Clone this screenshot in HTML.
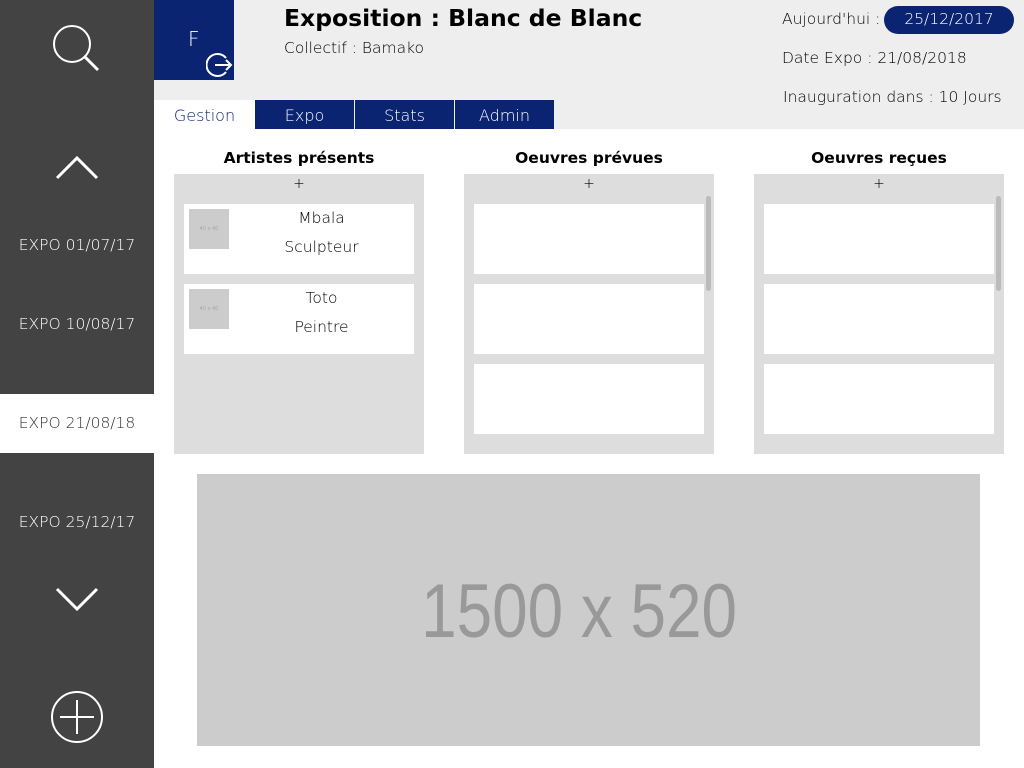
<!DOCTYPE html>
<html><head><meta charset="utf-8"><style>
*{margin:0;padding:0;box-sizing:border-box}
body{width:1024px;height:768px;position:relative;overflow:hidden;background:#fff;font-family:"DejaVu Sans","Liberation Sans",sans-serif;font-weight:200;color:#000}
.a{position:absolute}
#side{left:0;top:0;width:154px;height:768px;background:#434343}
.exp{left:0;width:154px;text-align:center;color:#fff;font-size:15.5px}
#top{left:154px;top:0;width:870px;height:129px;background:#eeeeee}
.tab{top:100px;height:29px;width:99px;background:#0b2472;color:#fff;font-size:16px;text-align:center;line-height:31px}
.col{width:250px;height:280px;top:174px;background:#dddddd}
.ttl{width:250px;text-align:center;font-weight:bold;font-size:15.5px;top:149px}
.card{left:10px;width:230px;height:70px;background:#fff}
.plus{width:250px;text-align:center;top:2px;font-size:14px}
.th{left:5px;top:5px;width:40px;height:40px;background:#ccc;font-size:5px;color:#888;text-align:center;line-height:40px}
.nm{left:50px;width:175px;text-align:center;font-size:15.5px}
.sb{left:242px;top:22px;width:5px;height:95px;background:#bbb;border-radius:3px}
</style></head><body>
<div id="side" class="a">
<svg class="a" style="left:50px;top:22px" width="54" height="54" viewBox="0 0 54 54"><circle cx="22" cy="22" r="18" fill="none" stroke="#fff" stroke-width="2"/><line x1="34" y1="34" x2="48" y2="48" stroke="#fff" stroke-width="3"/></svg>
<svg class="a" style="left:55px;top:152px" width="44" height="28"><polyline points="2,26 22,6 42,26" fill="none" stroke="#fff" stroke-width="3"/></svg>
<div class="a exp" style="top:236px">EXPO 01/07/17</div>
<div class="a exp" style="top:315px">EXPO 10/08/17</div>
<div class="a" style="left:0;top:394px;width:154px;height:59px;background:#fff"></div>
<div class="a exp" style="top:414px;color:#333">EXPO 21/08/18</div>
<div class="a exp" style="top:513px">EXPO 25/12/17</div>
<svg class="a" style="left:55px;top:586px" width="44" height="28"><polyline points="2,3 22,23 42,3" fill="none" stroke="#fff" stroke-width="3"/></svg>
<svg class="a" style="left:50px;top:690px" width="54" height="54"><circle cx="27" cy="27" r="25" fill="none" stroke="#fff" stroke-width="2"/><line x1="27" y1="10" x2="27" y2="44" stroke="#fff" stroke-width="2"/><line x1="10" y1="27" x2="44" y2="27" stroke="#fff" stroke-width="2"/></svg>
</div>
<div id="top" class="a">
<div class="a" style="left:0;top:0;width:80px;height:80px;background:#0b2472"></div>
<div class="a" style="left:34px;top:27px;color:#fff;font-size:20px">F</div>
<svg class="a" style="left:52px;top:52px" width="28" height="26"><path d="M20 6 A11 11 0 1 0 20 20" fill="none" stroke="#fff" stroke-width="2"/><line x1="9" y1="13" x2="25" y2="13" stroke="#fff" stroke-width="2"/><polyline points="20,8 25,13 20,18" fill="none" stroke="#fff" stroke-width="2"/></svg>
<div class="a" style="left:130px;top:4px;font-size:23.5px;font-weight:bold">Exposition : Blanc de Blanc</div>
<div class="a" style="left:130px;top:39px;font-size:15.5px">Collectif : Bamako</div>
<div class="a" style="left:628px;top:10px;font-size:15.5px">Aujourd'hui :</div>
<div class="a" style="left:730px;top:6px;width:130px;height:28px;border-radius:14px;background:#0b2472;color:#fff;font-size:15.5px;text-align:center;line-height:27px">25/12/2017</div>
<div class="a" style="left:628px;top:49px;font-size:15.5px">Date Expo : 21/08/2018</div>
<div class="a" style="left:629px;top:88px;font-size:15.5px">Inauguration dans : 10 Jours</div>
<div class="a" style="left:0;top:100px;width:101px;height:29px;background:#fff;color:#0b2472;font-size:16px;text-align:center;line-height:31px">Gestion</div>
<div class="a tab" style="left:101px">Expo</div>
<div class="a tab" style="left:201px">Stats</div>
<div class="a tab" style="left:301px">Admin</div>
</div>
<div class="a ttl" style="left:174px">Artistes présents</div>
<div class="a ttl" style="left:464px">Oeuvres prévues</div>
<div class="a ttl" style="left:754px">Oeuvres reçues</div>
<div class="a col" style="left:174px"><div class="a plus">+</div>
<div class="a card" style="top:30px"><div class="a th">40 x 40</div><div class="a nm" style="top:5px">Mbala</div><div class="a nm" style="top:34px">Sculpteur</div></div>
<div class="a card" style="top:110px"><div class="a th">40 x 40</div><div class="a nm" style="top:5px">Toto</div><div class="a nm" style="top:34px">Peintre</div></div>
</div>
<div class="a col" style="left:464px"><div class="a plus">+</div><div class="a sb"></div>
<div class="a card" style="top:30px"></div><div class="a card" style="top:110px"></div><div class="a card" style="top:190px"></div></div>
<div class="a col" style="left:754px"><div class="a plus">+</div><div class="a sb"></div>
<div class="a card" style="top:30px"></div><div class="a card" style="top:110px"></div><div class="a card" style="top:190px"></div></div>
<div class="a" style="left:197px;top:474px;width:783px;height:272px;background:#cccccc;color:#999;font-family:'Liberation Sans',sans-serif;font-weight:normal;font-size:76px;text-align:center;line-height:276px;padding-right:18px"><span style="display:inline-block;transform:scaleX(0.84)">1500 x 520</span></div>
</body></html>
